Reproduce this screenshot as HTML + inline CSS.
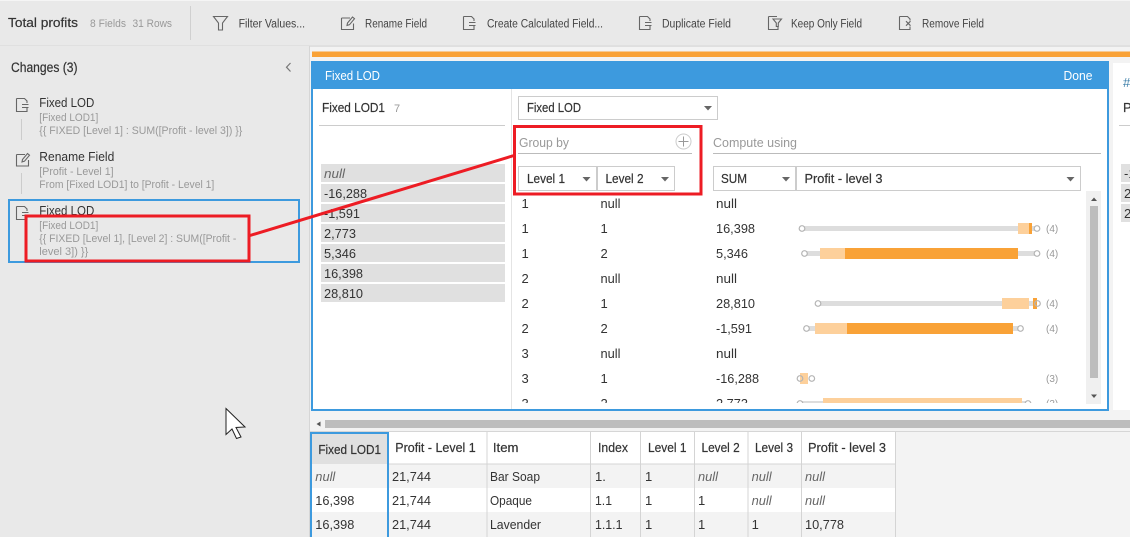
<!DOCTYPE html>
<html><head><meta charset="utf-8">
<style>
html,body{margin:0;padding:0;background:#f3f3f3;overflow:hidden}
svg{display:block}
text{font-family:"Liberation Sans",sans-serif;font-size:13px;fill:#333;white-space:pre}
.m{stroke:#333;stroke-width:.2}
.t{font-size:11.5px;fill:#444}
.g{font-size:11px;fill:#999}
.h{font-size:13px;fill:#999}
.i{font-style:italic;fill:#666}
.w{fill:#fff}
.c{font-size:10px;fill:#999}
.ic{fill:none;stroke:#666;stroke-width:1.1}
.dot{fill:#fff;stroke:#b5b5b5;stroke-width:1.2}
.tr{fill:#ddd}
.lo{fill:#fdd09b}
.hi{fill:#f9a237}
.bd{fill:#fff;stroke:#ccc;stroke-width:1}
.ar{fill:#666}
</style></head>
<body>
<svg width="1130" height="537" viewBox="0 0 1130 537" xmlns="http://www.w3.org/2000/svg">
<defs>
<g id="doc"><path class="ic" d="M.5 .5H8.5L11 3V5M11 10V13.5H.5V.5"/><path class="ic" d="M6 6.5H12.5M6 9.5H12.5"/></g>
<g id="ren"><path class="ic" d="M.5 2.500H9M12.500 8V14H.5V2.500"/><path class="ic" d="M6 10L6.500 7.500L11.500 1.500L13.500 3.200L8.500 9.200Z"/></g>
<g id="keep"><path class="ic" d="M.5 .5H9M10 11V13.5H.5V.5"/><path class="ic" d="M5 3H13.5L10.3 7V10.5H8.3V7Z"/></g>
<g id="rem"><path class="ic" d="M.5 .5H8.5L11 3V4.5M11 10.5V13.5H.5V.5"/><path class="ic" d="M7 5.2L11.5 9.7M11.5 5.2L7 9.7"/></g>
<path id="dn" class="ar" d="M0 0H8L4 4.5Z"/>
</defs>

<!-- backgrounds -->
<rect width="1130" height="537" fill="#f3f3f3"/>
<rect width="1130" height="45.5" fill="#e9e9e9"/>
<rect width="1130" height="1" fill="#f5f5f5"/>
<rect y="45.5" width="1130" height="1.2" fill="#d6d6d6"/>
<rect x="0" y="46" width="309" height="491" fill="#e9e9e9"/>
<rect x="309" y="46" width="1" height="491" fill="#d6d6d6"/>
<rect x="190" y="6" width="1" height="34" fill="#d0d0d0"/>
<rect x="312" y="51.5" width="818" height="5.5" fill="#f9a237"/>

<!-- toolbar -->
<text x="8" y="27" class="m" textLength="70" lengthAdjust="spacingAndGlyphs">Total profits</text>
<text x="90" y="27" class="g" textLength="36" lengthAdjust="spacingAndGlyphs">8 Fields</text>
<text x="132.500" y="27" class="g" textLength="39.500" lengthAdjust="spacingAndGlyphs">31 Rows</text>
<path class="ic" d="M213.500 16.500H227.500L222.500 23V30H218.500V23Z"/>
<text x="238.600" y="27.500" class="t" textLength="66.500" lengthAdjust="spacingAndGlyphs">Filter Values...</text>
<use href="#ren" x="341" y="15.500"/>
<text x="365" y="27.500" class="t" textLength="62" lengthAdjust="spacingAndGlyphs">Rename Field</text>
<use href="#doc" x="463" y="16"/>
<text x="487" y="27.500" class="t" textLength="116" lengthAdjust="spacingAndGlyphs">Create Calculated Field...</text>
<use href="#doc" x="639" y="16"/>
<text x="662" y="27.500" class="t" textLength="69" lengthAdjust="spacingAndGlyphs">Duplicate Field</text>
<use href="#keep" x="768" y="16"/>
<text x="791" y="27.500" class="t" textLength="71" lengthAdjust="spacingAndGlyphs">Keep Only Field</text>
<use href="#rem" x="899" y="16"/>
<text x="922" y="27.500" class="t" textLength="62" lengthAdjust="spacingAndGlyphs">Remove Field</text>

<!-- left panel -->
<text x="11" y="72" class="m" textLength="66.500" lengthAdjust="spacingAndGlyphs" style="font-size:13.5px">Changes (3)</text>
<path d="M290.500 63L286.500 67.200L290.500 71.500" fill="none" stroke="#777" stroke-width="1.200"/>

<use href="#doc" x="16" y="98"/>
<rect x="21" y="119" width="1" height="21" fill="#ccc"/>
<text x="39.300" y="107" textLength="55" lengthAdjust="spacingAndGlyphs">Fixed LOD</text>
<text x="39.300" y="121" class="g" textLength="59" lengthAdjust="spacingAndGlyphs">[Fixed LOD1]</text>
<text x="39.300" y="134" class="g" textLength="203" lengthAdjust="spacingAndGlyphs">{{ FIXED [Level 1] : SUM([Profit - level 3]) }}</text>

<use href="#ren" x="16" y="152"/>
<rect x="21" y="173" width="1" height="21" fill="#ccc"/>
<text x="39.300" y="161" textLength="75" lengthAdjust="spacingAndGlyphs">Rename Field</text>
<text x="39.300" y="175" class="g" textLength="74.300" lengthAdjust="spacingAndGlyphs">[Profit - Level 1]</text>
<text x="39.300" y="188" class="g" textLength="175" lengthAdjust="spacingAndGlyphs">From [Fixed LOD1] to [Profit - Level 1]</text>

<rect x="9" y="200" width="290" height="62" fill="none" stroke="#3d9ade" stroke-width="2"/>
<use href="#doc" x="16" y="206"/>
<text x="39.300" y="215" textLength="55" lengthAdjust="spacingAndGlyphs">Fixed LOD</text>
<text x="39.300" y="229" class="g" textLength="59" lengthAdjust="spacingAndGlyphs">[Fixed LOD1]</text>
<text x="39.300" y="242" class="g" textLength="197" lengthAdjust="spacingAndGlyphs">{{ FIXED [Level 1], [Level 2] : SUM([Profit -</text>
<text x="39.300" y="255" class="g" textLength="49" lengthAdjust="spacingAndGlyphs">level 3]) }}</text>

<!-- cursor -->
<path d="M226 408.500L245 427L236 427.500L241 437L236.500 438.500L232 429L226 434.500Z" fill="#fff" stroke="#222" stroke-width="1"/>

<!-- next panel -->
<rect x="1113" y="63" width="17" height="347" fill="#fff"/>
<text x="1123" y="87" style="font-size:13px;fill:#3b7ea8">#</text>
<text x="1123" y="112" class="m">P</text>
<rect x="1119" y="125" width="11" height="1" fill="#ccc"/>
<rect x="1121" y="164" width="9" height="18" fill="#e0e0e0"/>
<rect x="1121" y="184" width="9" height="18" fill="#e0e0e0"/>
<rect x="1121" y="204" width="9" height="18" fill="#e0e0e0"/>
<text x="1124" y="178">-1</text>
<text x="1124" y="198">2</text>
<text x="1124" y="218">2</text>

<!-- main panel -->
<rect x="312" y="62" width="796" height="348" fill="#fff" stroke="#3d9ade" stroke-width="2"/>
<rect x="311" y="61" width="798" height="28" fill="#3d9ade"/>
<text x="325" y="80" class="w" textLength="55" lengthAdjust="spacingAndGlyphs">Fixed LOD</text>
<text x="1063.500" y="80" class="w" textLength="29" lengthAdjust="spacingAndGlyphs">Done</text>
<rect x="511" y="89" width="1" height="320" fill="#e4e4e4"/>

<text x="322" y="112" class="m" textLength="63" lengthAdjust="spacingAndGlyphs">Fixed LOD1</text>
<text x="394" y="112" class="g">7</text>
<rect x="319" y="125" width="186" height="1" fill="#ccc"/>
<g fill="#e0e0e0">
<rect x="321" y="164" width="184" height="18"/><rect x="321" y="184" width="184" height="18"/>
<rect x="321" y="204" width="184" height="18"/><rect x="321" y="224" width="184" height="18"/>
<rect x="321" y="244" width="184" height="18"/><rect x="321" y="264" width="184" height="18"/>
<rect x="321" y="284" width="184" height="18"/>
</g>
<text x="324" y="178" class="i" textLength="21" lengthAdjust="spacingAndGlyphs">null</text>
<text x="324" y="198" textLength="43" lengthAdjust="spacingAndGlyphs">-16,288</text>
<text x="324" y="218" textLength="36" lengthAdjust="spacingAndGlyphs">-1,591</text>
<text x="324" y="238" textLength="32" lengthAdjust="spacingAndGlyphs">2,773</text>
<text x="324" y="258" textLength="32" lengthAdjust="spacingAndGlyphs">5,346</text>
<text x="324" y="278" textLength="39" lengthAdjust="spacingAndGlyphs">16,398</text>
<text x="324" y="298" textLength="39" lengthAdjust="spacingAndGlyphs">28,810</text>

<!-- dropdowns -->
<rect x="518.500" y="96.500" width="199" height="23" class="bd"/>
<text x="527" y="112" class="m" textLength="54" lengthAdjust="spacingAndGlyphs">Fixed LOD</text>
<use href="#dn" x="704" y="106"/>

<text x="519" y="147" class="h" textLength="50" lengthAdjust="spacingAndGlyphs">Group by</text>
<rect x="518" y="153" width="174" height="1" fill="#bbb"/>
<circle cx="683.500" cy="141.500" r="7.500" fill="#fff" stroke="#ccc" stroke-width="1"/>
<path d="M683.500 136.500V146.500M678.500 141.500H688.500" stroke="#999" stroke-width="1"/>

<rect x="518.500" y="166.500" width="78" height="24" class="bd"/>
<rect x="597.500" y="166.500" width="77" height="24" class="bd"/>
<text x="527" y="183" class="m" textLength="38" lengthAdjust="spacingAndGlyphs">Level 1</text>
<use href="#dn" x="582.500" y="177"/>
<text x="605.500" y="183" class="m" textLength="38" lengthAdjust="spacingAndGlyphs">Level 2</text>
<use href="#dn" x="661" y="177"/>

<text x="713" y="147" class="h" textLength="84" lengthAdjust="spacingAndGlyphs">Compute using</text>
<rect x="713" y="153" width="388" height="1" fill="#bbb"/>
<rect x="713.500" y="166.500" width="82" height="24" class="bd"/>
<rect x="796.500" y="166.500" width="284" height="24" class="bd"/>
<text x="721" y="183" class="m" textLength="26" lengthAdjust="spacingAndGlyphs">SUM</text>
<use href="#dn" x="782" y="177"/>
<text x="804.500" y="183" class="m" textLength="78" lengthAdjust="spacingAndGlyphs">Profit - level 3</text>
<use href="#dn" x="1066.500" y="177"/>

<!-- rows clip -->
<svg x="513" y="192" width="575" height="211" viewBox="513 192 575 211">
<text x="521.500" y="208">1</text><text x="600.500" y="208" textLength="20" lengthAdjust="spacingAndGlyphs">null</text><text x="716" y="208" textLength="21" lengthAdjust="spacingAndGlyphs">null</text>
<text x="521.500" y="233">1</text><text x="600.500" y="233">1</text><text x="716" y="233" textLength="39" lengthAdjust="spacingAndGlyphs">16,398</text>
<text x="521.500" y="258">1</text><text x="600.500" y="258">2</text><text x="716" y="258" textLength="32" lengthAdjust="spacingAndGlyphs">5,346</text>
<text x="521.500" y="283">2</text><text x="600.500" y="283" textLength="20" lengthAdjust="spacingAndGlyphs">null</text><text x="716" y="283" textLength="21" lengthAdjust="spacingAndGlyphs">null</text>
<text x="521.500" y="308">2</text><text x="600.500" y="308">1</text><text x="716" y="308" textLength="39" lengthAdjust="spacingAndGlyphs">28,810</text>
<text x="521.500" y="333">2</text><text x="600.500" y="333">2</text><text x="716" y="333" textLength="36" lengthAdjust="spacingAndGlyphs">-1,591</text>
<text x="521.500" y="358">3</text><text x="600.500" y="358" textLength="20" lengthAdjust="spacingAndGlyphs">null</text><text x="716" y="358" textLength="21" lengthAdjust="spacingAndGlyphs">null</text>
<text x="521.500" y="383">3</text><text x="600.500" y="383">1</text><text x="716" y="383" textLength="43" lengthAdjust="spacingAndGlyphs">-16,288</text>
<text x="521.500" y="408">3</text><text x="600.500" y="408">2</text><text x="716" y="408" textLength="32" lengthAdjust="spacingAndGlyphs">2,773</text>

<rect x="802" y="226" width="235" height="5" class="tr"/>
<rect x="1018" y="223" width="14" height="11" class="lo"/><rect x="1029" y="223" width="3" height="11" class="hi"/>
<circle cx="802" cy="228.500" r="2.800" class="dot"/><circle cx="1037" cy="228.500" r="2.800" class="dot"/>
<text x="1046" y="232" class="c">(4)</text>

<rect x="804" y="251" width="233" height="5" class="tr"/>
<rect x="820" y="248" width="25" height="11" class="lo"/><rect x="845" y="248" width="173" height="11" class="hi"/>
<circle cx="804.500" cy="253.500" r="2.800" class="dot"/><circle cx="1037" cy="253.500" r="2.800" class="dot"/>
<text x="1046" y="257" class="c">(4)</text>

<rect x="818" y="301" width="219" height="5" class="tr"/>
<rect x="1002" y="298" width="27" height="11" class="lo"/><rect x="1033" y="298" width="4" height="11" class="hi"/>
<circle cx="818" cy="303.500" r="2.800" class="dot"/><circle cx="1037.500" cy="303.500" r="2.800" class="dot" style="fill:none"/>
<text x="1046" y="307" class="c">(4)</text>

<rect x="806" y="326" width="215" height="5" class="tr"/>
<rect x="815" y="323" width="32" height="11" class="lo"/><rect x="847" y="323" width="166" height="11" class="hi"/>
<circle cx="806.500" cy="328.500" r="2.800" class="dot"/><circle cx="1020.500" cy="328.500" r="2.800" class="dot"/>
<text x="1046" y="332" class="c">(4)</text>

<rect x="800" y="373" width="8" height="11" class="lo"/>
<circle cx="800" cy="378.500" r="2.800" class="dot" style="fill:none"/><circle cx="811.800" cy="378.500" r="2.800" class="dot"/>
<text x="1046" y="382" class="c">(3)</text>

<rect x="800" y="401" width="228" height="5" class="tr"/>
<rect x="823" y="398" width="199" height="11" class="lo"/>
<circle cx="800" cy="403.500" r="2.800" class="dot"/><circle cx="1028" cy="403.500" r="2.800" class="dot"/>
<text x="1046" y="407" class="c">(3)</text>
</svg>

<!-- v scrollbar -->
<rect x="1086" y="191" width="15" height="213" fill="#f0f0f0"/>
<rect x="1090" y="206" width="8" height="172" fill="#bdbdbd"/>
<path d="M1091 201H1097L1094 197.500Z" fill="#555"/>
<path d="M1091 394.500H1097L1094 398Z" fill="#555"/>

<!-- h scrollbar -->
<rect x="325" y="420" width="805" height="8" fill="#bdbdbd"/>
<path d="M320.500 421.500V426.500L316.500 424Z" fill="#555"/>
<rect x="310" y="431" width="820" height="1" fill="#d6d6d6"/>

<!-- table -->
<rect x="310" y="432" width="585" height="105" fill="#fff"/>
<rect x="312" y="464" width="583" height="24" fill="#f3f3f3"/>
<rect x="312" y="512" width="583" height="25" fill="#f3f3f3"/>
<rect x="312" y="433" width="76" height="31" fill="#e0e0e0"/>
<rect x="388" y="463.500" width="507" height="1" fill="#d4d4d4"/>
<g fill="#d4d4d4">
<rect x="486.500" y="432" width="1" height="105"/>
<rect x="590" y="432" width="1" height="105"/>
<rect x="640" y="432" width="1" height="105"/>
<rect x="694" y="432" width="1" height="105"/>
<rect x="747.500" y="432" width="1" height="105"/>
<rect x="801" y="432" width="1" height="105"/>
<rect x="895" y="432" width="1" height="105"/>
</g>
<rect x="310" y="432" width="78.500" height="2" fill="#3d9ade"/>
<rect x="310" y="432" width="2" height="105" fill="#3d9ade"/>
<rect x="387" y="432" width="2" height="105" fill="#3d9ade"/>

<text x="318.400" y="454" class="m" textLength="62.600" lengthAdjust="spacingAndGlyphs">Fixed LOD1</text>
<text x="395.300" y="452" class="m" textLength="80.400" lengthAdjust="spacingAndGlyphs">Profit - Level 1</text>
<text x="492.900" y="452" class="m" textLength="25.600" lengthAdjust="spacingAndGlyphs">Item</text>
<text x="598" y="452" class="m" textLength="30" lengthAdjust="spacingAndGlyphs">Index</text>
<text x="648" y="452" class="m" textLength="38.500" lengthAdjust="spacingAndGlyphs">Level 1</text>
<text x="701.500" y="452" class="m" textLength="38.200" lengthAdjust="spacingAndGlyphs">Level 2</text>
<text x="755" y="452" class="m" textLength="38" lengthAdjust="spacingAndGlyphs">Level 3</text>
<text x="808" y="452" class="m" textLength="78" lengthAdjust="spacingAndGlyphs">Profit - level 3</text>

<text x="315.300" y="481" class="i" textLength="20" lengthAdjust="spacingAndGlyphs">null</text>
<text x="392" y="481" textLength="39" lengthAdjust="spacingAndGlyphs">21,744</text>
<text x="490" y="481" textLength="50" lengthAdjust="spacingAndGlyphs">Bar Soap</text>
<text x="595" y="481">1.</text>
<text x="645" y="481">1</text>
<text x="698" y="481" class="i" textLength="20" lengthAdjust="spacingAndGlyphs">null</text>
<text x="751.600" y="481" class="i" textLength="20" lengthAdjust="spacingAndGlyphs">null</text>
<text x="805" y="481" class="i" textLength="20" lengthAdjust="spacingAndGlyphs">null</text>

<text x="315.300" y="505" textLength="39" lengthAdjust="spacingAndGlyphs">16,398</text>
<text x="392" y="505" textLength="39" lengthAdjust="spacingAndGlyphs">21,744</text>
<text x="490" y="505" textLength="42" lengthAdjust="spacingAndGlyphs">Opaque</text>
<text x="595" y="505" textLength="17" lengthAdjust="spacingAndGlyphs">1.1</text>
<text x="645" y="505">1</text>
<text x="698" y="505">1</text>
<text x="751.600" y="505" class="i" textLength="20" lengthAdjust="spacingAndGlyphs">null</text>
<text x="805" y="505" class="i" textLength="20" lengthAdjust="spacingAndGlyphs">null</text>

<text x="315.300" y="529" textLength="39" lengthAdjust="spacingAndGlyphs">16,398</text>
<text x="392" y="529" textLength="39" lengthAdjust="spacingAndGlyphs">21,744</text>
<text x="490" y="529" textLength="51" lengthAdjust="spacingAndGlyphs">Lavender</text>
<text x="595" y="529" textLength="27.500" lengthAdjust="spacingAndGlyphs">1.1.1</text>
<text x="645" y="529">1</text>
<text x="698" y="529">1</text>
<text x="751.600" y="529">1</text>
<text x="805" y="529" textLength="39" lengthAdjust="spacingAndGlyphs">10,778</text>

<!-- red annotations -->
<rect x="514.500" y="126.500" width="186.500" height="67.500" fill="none" stroke="#ed1c24" stroke-width="3"/>
<rect x="26" y="216" width="223" height="45" fill="none" stroke="#ed1c24" stroke-width="3"/>
<path d="M250 235.500L514 155.500" stroke="#ed1c24" stroke-width="3" fill="none"/>
</svg>
</body></html>
